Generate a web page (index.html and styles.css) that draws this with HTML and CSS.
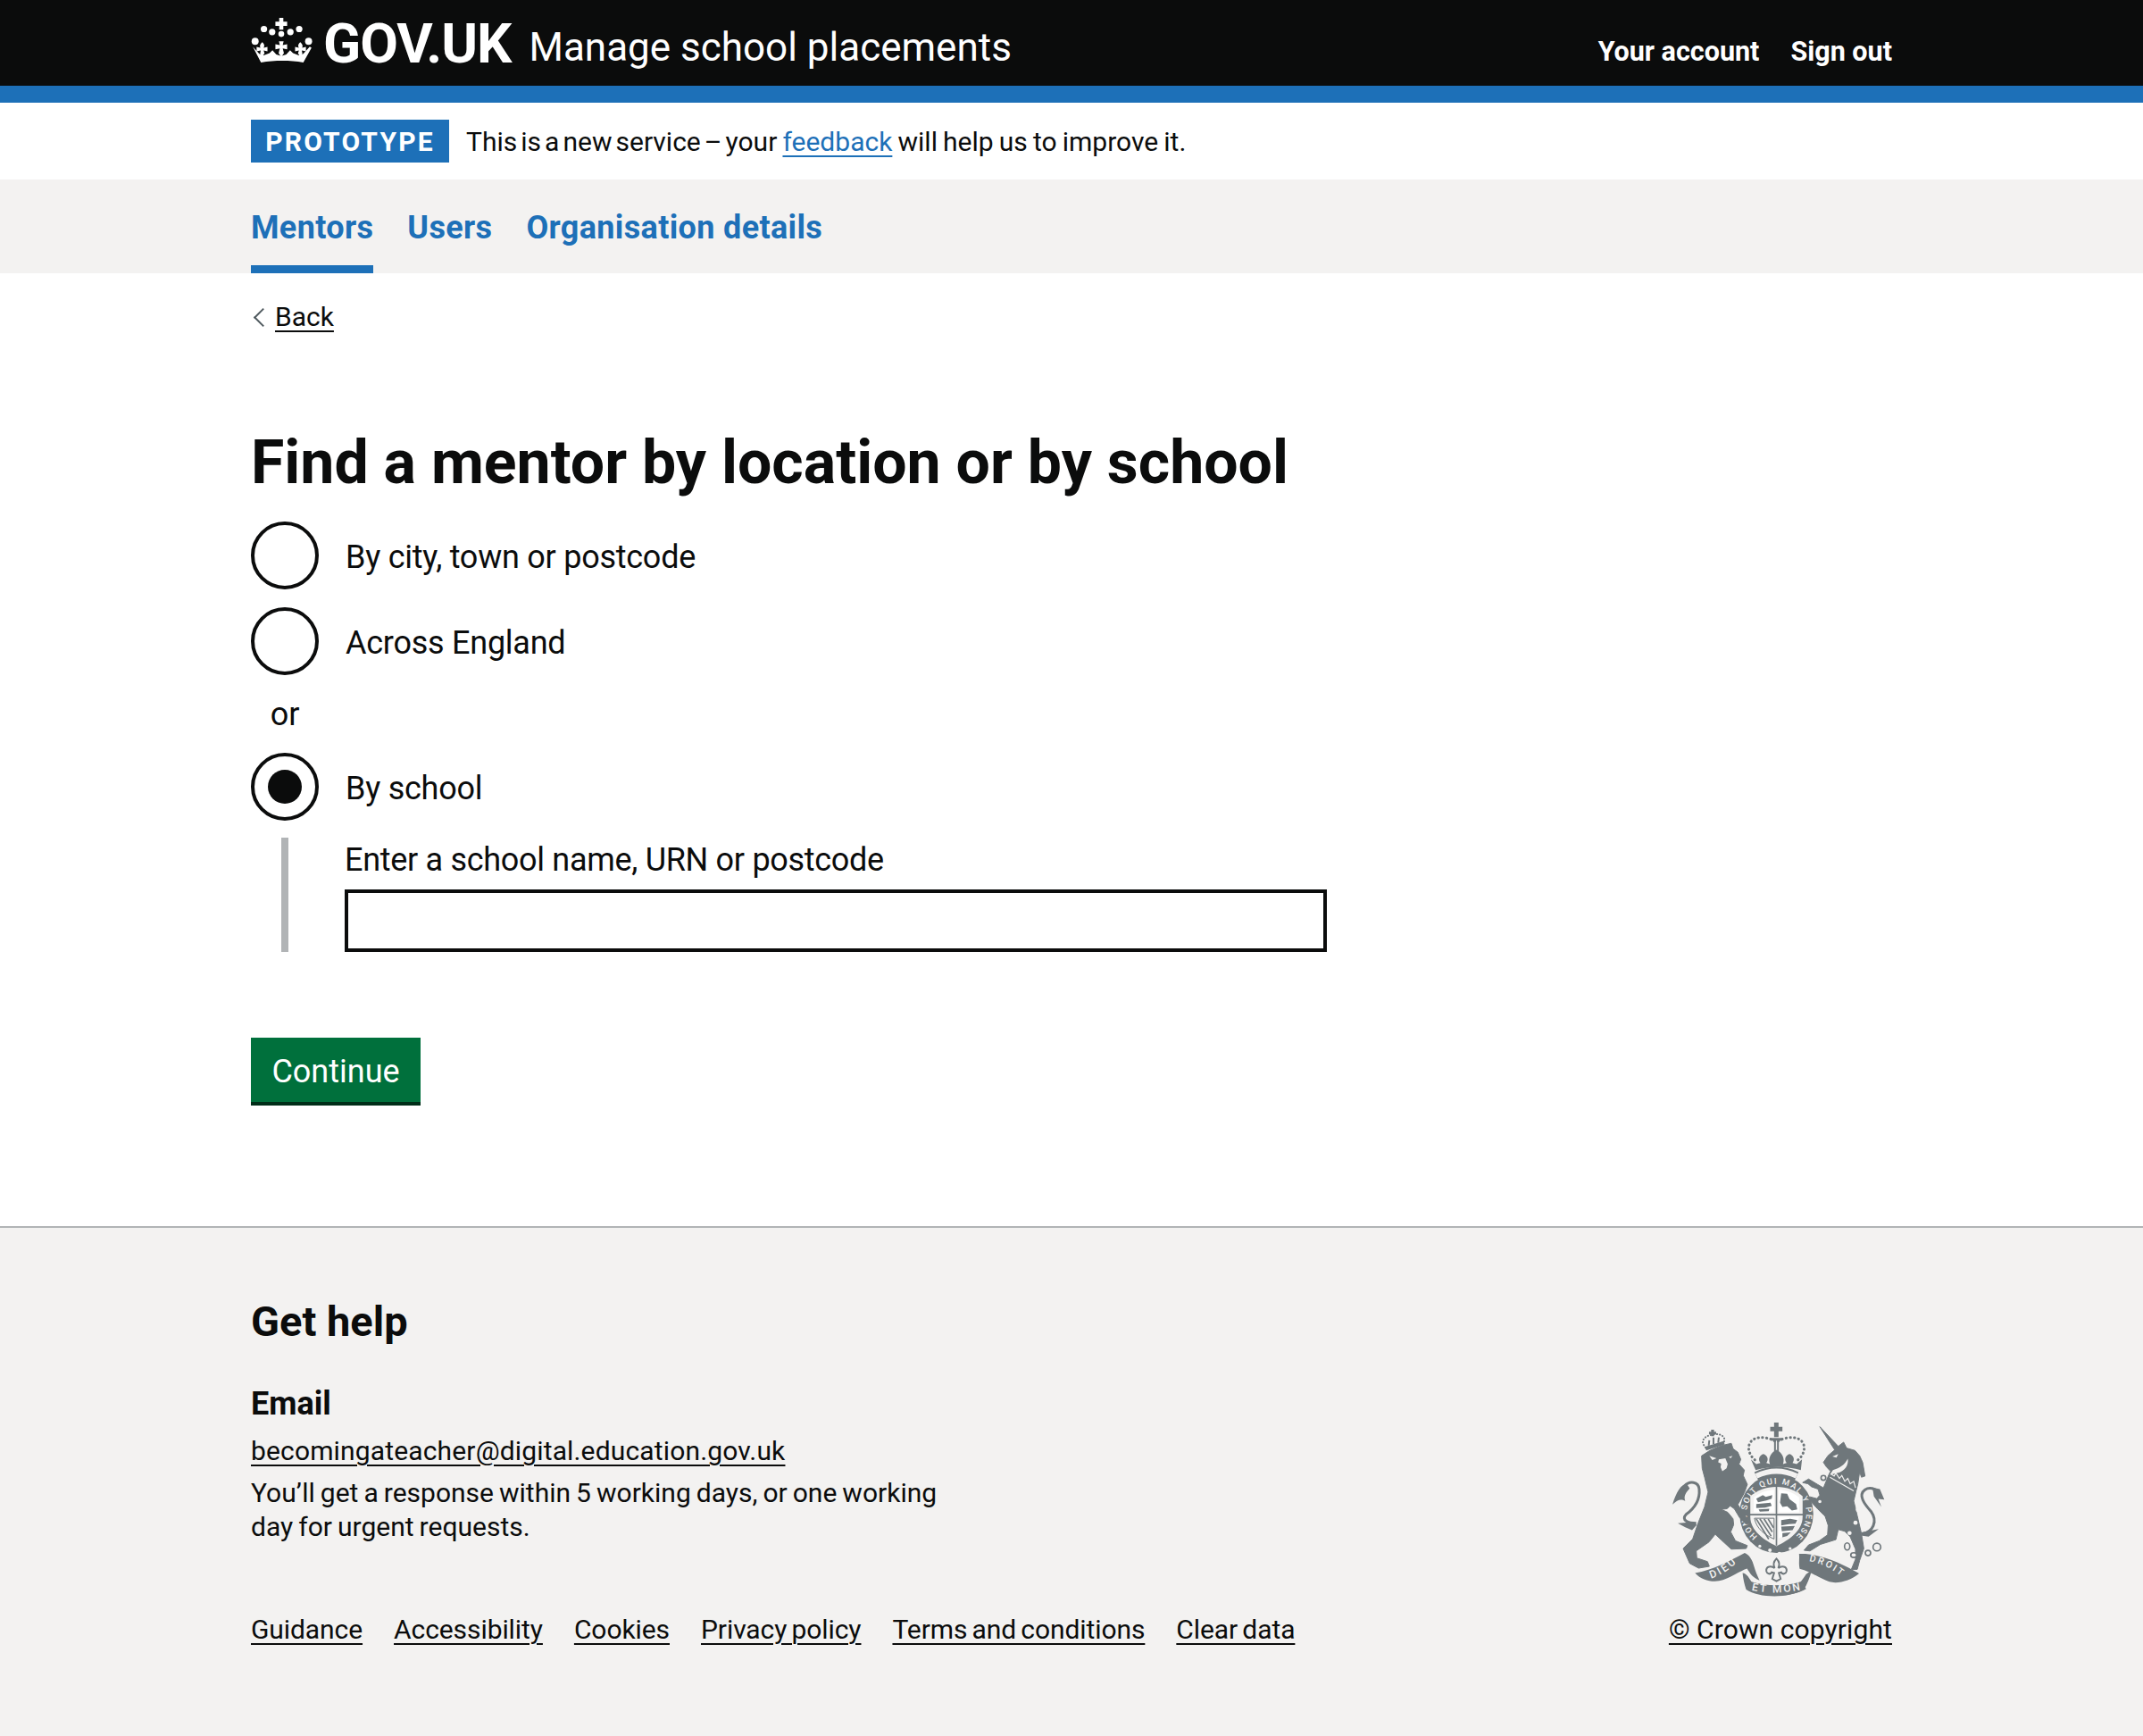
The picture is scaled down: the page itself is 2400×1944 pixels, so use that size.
FILE: index.html
```html
<!DOCTYPE html>
<html lang="en">
<head>
	<meta charset="UTF-8">
	<title>Find a mentor by location or by school</title>
	<link rel="stylesheet" href="styles.css">
</head>
<body>
	<header class="top">
		<div class="wrap top-in">
			<a class="logo" href="#">
				<svg class="crown" viewBox="33 30 207 152" aria-hidden="true">
					<path d="M128 30h14v13h13v14h-13v13h-14V57h-13V43h13z"/>
					<circle cx="135" cy="85" r="10"/>
					<circle cx="46" cy="110" r="12"/><circle cx="76" cy="68" r="11"/><circle cx="104" cy="78" r="11"/>
					<circle cx="166" cy="78" r="11"/><circle cx="196" cy="68" r="11"/><circle cx="228" cy="110" r="12"/>
					<path d="M127 110h16l-3 13 15-3v17l-15-3 4 16-9 14-9-14 4-16-15 3v-17l15 3z"/>
					<path d="M70 113c9 7 8 14 5 19l13-3v15l-13-3 3 10-7 10-8-9 2-11-14 3v-15l13 3c-3-5-2-12 6-19z"/>
					<path d="M200 113c-9 7-8 14-5 19l-13-3v15l13-3-3 10 7 10 8-9-2-11 14 3v-15l-13 3c3-5 2-12-6-19z"/>
					<path d="M38 128l22 24 15 6 20-8 10-10 13 15 17 5 17-5 13-15 10 10 20 8 15-6 22-24 6 4-28 50c-46-8-96-8-144 0z"/>
				</svg>
				<span class="logo-txt">GOV.UK</span>
			</a>
			<a class="service" href="#">Manage school placements</a>
			<nav class="top-nav">
				<a href="#">Your account</a>
				<a href="#">Sign out</a>
			</nav>
		</div>
	</header>
	<div class="wrap phase">
		<strong class="tag">PROTOTYPE</strong>
		<span><span class="lead">This is a new service – your</span> <a href="#">feedback</a> will help us to improve it.</span>
	</div>
	<nav class="sub-nav">
		<div class="wrap sub-nav-in">
			<a class="on" href="#">Mentors</a>
			<a href="#">Users</a>
			<a href="#">Organisation details</a>
		</div>
	</nav>
	<main class="wrap main">
		<a class="back" href="#">Back</a>
		<h1>Find a mentor by location or by school</h1>
		<form>
			<label class="radio"><span class="dot"></span>By city, town or postcode</label>
			<label class="radio"><span class="dot"></span>Across England</label>
			<div class="or">or</div>
			<label class="radio"><span class="dot checked"></span>By school</label>
			<div class="reveal">
				<label class="field-label" for="school">Enter a school name, URN or postcode</label>
				<input class="field" id="school" type="text">
			</div>
			<button class="btn" type="button">Continue</button>
		</form>
	</main>
	<footer class="foot">
		<div class="wrap">
			<h2>Get help</h2>
			<div class="foot-mid">
				<div class="help">
					<h3>Email</h3>
					<p class="mail"><a href="#">becomingateacher@digital.education.gov.uk</a></p>
					<p class="note">You’ll get a response within 5 working days, or one working day for urgent requests.</p>
				</div>
				<svg class="crest" viewBox="100 60 722 592" aria-hidden="true">
					<defs>
						<path id="arcRing" d="M388 449A100 100 0 1 1 516 449"/>
						<path id="arcD" d="M228 592c34-8 70-34 104-68"/>
						<path id="arcE" d="M368 630c50 12 120 10 170-2"/>
						<path id="arcF" d="M562 532c44 8 84 30 116 58"/>
					</defs>
					<!-- crown over the shield -->
					<path d="M444 66h15v14h13v15h-13v20h-15V95h-13V80h13z"/>
					<rect x="433" y="118" width="38" height="9"/>
					<rect x="444" y="127" width="6" height="38"/><rect x="454" y="127" width="6" height="38"/>
					<path class="line dots" d="M458 128c30-16 70-18 84 8 10 22-4 46-20 58"/>
					<path class="line dots" d="M446 128c-30-16-70-18-84 8-10 22 4 46 20 58"/>
					<path d="M366 190l18 16 14-4c-10-14-2-26 10-30 12 4 20 16 10 30l12 4c-8-22 6-40 22-48 16 8 30 26 22 48l12-4c-10-14-2-26 10-30 12 4 20 16 10 30l14 4 18-16-4 36c-46-14-106-14-152 0z"/>
					<path class="band-out" d="M384 246Q452 214 520 246"/>
					<path class="band-in" d="M384 246Q452 214 520 246"/>
					<!-- garter and shield -->
					<ellipse cx="452" cy="373" rx="124" ry="132"/>
					<path class="bg" d="M452 282c34 0 66 12 88 32v70c0 46-46 78-88 98-42-20-88-52-88-98v-70c22-20 54-32 88-32z"/>
					<path class="quarter" d="M376 318c18-16 40-24 68-26v76h-68z"/>
					<path class="quarter" d="M460 292c28 2 50 10 68 26v50h-68z"/>
					<path class="quarter" d="M460 384h68c-4 34-36 56-68 72z"/>
					<path class="band" d="M362 376h180M452 282v198"/>
					<path class="beast" d="M384 322l22-12 10 6 22-6-2 12-18 6-28 6zM384 340l48-4 4 10-22 6-30 2zM392 358l36-2-2 8-30 2zM468 304l20 2 8 18 22 16 4 18-18 4-16-14-16 2-8-14zM468 394l30-4 24 4-6 12-22 2-26 4zM468 416l46-2-8 14-36 4zM472 438l28-2-12 12-16 4z"/>
					<path class="harp" d="M384 390l42 68M396 390l38 58M410 390l28 44M424 390l18 30"/>
					<path class="band thin" d="M378 388h66v70c-32-14-60-36-66-70z"/>
					<text class="motto"><textPath href="#arcRing" textLength="486" lengthAdjust="spacing">HONI SOIT QUI MAL Y PENSE</textPath></text>
					<circle class="bg" cx="430" cy="496" r="6"/><circle class="bg" cx="462" cy="507" r="6"/><circle class="bg" cx="396" cy="482" r="5"/><circle class="bg" cx="498" cy="490" r="5"/>
					<!-- lion -->
					<g transform="translate(60 60)">
						<path class="edge" d="M140 118L168 100 205 84 240 76 246 94 262 106 272 130 266 146 284 166 280 184 294 214 284 242 270 268 262 282 280 310 304 345 290 348 268 326 250 296 236 286 226 296 206 298 228 308 246 330 248 350 238 374 254 404 294 420 290 430 240 432 205 400 186 382 165 408 122 438 124 462 160 474 166 490 130 496 100 480 78 430 110 398 128 345 150 290 162 240 150 190 142 160z"/>
						<path class="bg-fill" d="M166 118l24 8-14 6zM198 130l22-4 8 20-4 14-14 10-6-14 2-12-10-4zM232 122l12-4-6 8z"/>
						<path class="line tail" d="M122 345C95 345 70 335 88 315 115 295 135 265 132 230 130 205 100 200 82 220"/>
						<path d="M90 212C70 215 55 240 42 282 60 265 70 262 85 270 78 252 90 240 100 228zM60 345l40-3 24 8-16 18-23-10z"/>
						<path class="line dots small" d="M154 90C134 70 146 52 178 46 208 40 224 58 214 74"/>
						<path d="M150 88l64-20 4 12-62 20zM172 30h10v7h7v9h-7v6h-10v-6h-7v-9h7z"/>
						<path class="line lion-crown" d="M164 84l2-18M180 78l0-22M196 74l2-18"/>
					</g>
					<!-- unicorn -->
					<g transform="translate(420 60)">
						<path class="edge" d="M178 20L240 86 258 72 268 92 296 100 312 118 322 140 330 186 318 190 312 172 306 212 300 236 292 270 304 320 318 380 326 430 312 470 304 500 284 500 298 466 298 432 280 390 262 372 240 366 232 400 180 416 145 438 125 436 140 418 176 404 204 384 206 352 196 322 192 318 170 296 135 258 145 256 168 262 178 250 172 230 150 222 138 212 120 208 140 196 170 214 190 226 208 182 214 170 200 155 190 140 205 118 228 98z"/>
						<path class="bg-fill" d="M222 166c23-6 40-18 50-38 4 20-10 44-36 48l-24 6zM220 120l20-8-6 12z"/>
						<path class="collar" d="M212 190l80 46M214 178l12 8 6-10 12 18 8-10 10 20 10-10 8 18 12-8 6 22"/>
						<circle class="ring" cx="190" cy="192" r="8"/><circle class="ring" cx="178" cy="272" r="8"/><circle class="hole" cx="308" cy="298" r="9"/>
						<circle class="hole" cx="298" cy="343" r="7"/><circle class="hole" cx="278" cy="378" r="7"/>
						<ellipse class="ring" cx="270" cy="423" rx="9" ry="12"/><ellipse class="ring" cx="292" cy="452" rx="10" ry="8"/><circle class="ring" cx="340" cy="445" r="9"/><circle class="ring" cx="370" cy="425" r="13"/>
						<path class="line tail" d="M322 380C355 375 375 340 350 305 328 280 305 250 330 232 345 222 365 228 372 240"/>
						<path d="M355 225l25 5 15 35-20-2 10 27-25-35zM318 376l58-12-34 26-26-4z"/>
					</g>
					<!-- motto scroll -->
					<path d="M178 572c60-8 120-42 167-67 16 6 26 24 32 46 4 14 10 28 18 46-24-10-32-24-42-40-20 6-60 34-94 42-30 4-60-4-81-27z"/>
					<path d="M338 572c6 0 12 4 18 12l12 18c50 16 116 16 166 0l14-20c4-8 10-12 22-16-6 20-14 44-26 62-50 30-150 30-194 0-6-18-10-36-12-56z"/>
					<path class="ribbon" d="M364 602c50 18 122 18 172 0l16 24c-50 30-150 30-198 0z"/>
					<path d="M528 508c60-4 140 28 202 66-28 24-70 36-100 28-34-12-60-34-100-44-4-16 0-34-2-50z"/>
					<text class="scroll"><textPath href="#arcD" startOffset="4" textLength="100">DIEU</textPath></text>
					<text class="scroll"><textPath href="#arcE" textLength="166">ET MON</textPath></text>
					<text class="scroll small"><textPath href="#arcF" textLength="118">DROIT</textPath></text>
					<!-- fleur -->
					<path class="fleur" d="M452 524c10 10 12 20 6 32 12-10 30-6 28 10-2 10-14 12-18 4l-8 2 6 20-14 8-14-8 6-20-8-2c-4 8-16 6-18-4-2-16 16-20 28-10-6-12-4-22 6-32z"/>
				</svg>
			</div>
			<div class="foot-links">
				<a href="#">Guidance</a>
				<a href="#">Accessibility</a>
				<a href="#">Cookies</a>
				<a href="#">Privacy policy</a>
				<a href="#">Terms and conditions</a>
				<a href="#">Clear data</a>
				<a class="copy" href="#">© Crown copyright</a>
			</div>
		</div>
	</footer>
</body>
</html>
```
FILE: styles.css
```css
* {margin: 0;padding: 0;box-sizing: border-box;}
html, body {height: 100%;}
body {display: flex;flex-direction: column;min-height: 100vh;font-family: Roboto, "Liberation Sans", sans-serif;color: #0b0c0c;background: #fff;}
a {color: inherit;text-underline-offset: 5px;text-decoration-thickness: 2px;}
.wrap {width: 1838px;margin: 0 auto;}

.top {height: 115px;background: #0b0c0c;border-bottom: 19px solid #1d70b8;}
.top-in {display: flex;height: 96px;}
.top a {color: #fff;text-decoration: none;}
.logo {display: flex;align-items: flex-start;padding-top: 20px;}
.crown {width: 69px;height: 50px;fill: #fff;}
.logo-txt {margin-left: 12px;font-size: 62px;line-height: 58px;font-weight: 700;letter-spacing: -1px;}
.service {margin-left: 20px;padding-top: 25px;font-size: 44px;line-height: 56px;}
.top-nav {display: flex;gap: 35px;margin-left: auto;padding-top: 38px;font-size: 30.5px;line-height: 40px;font-weight: 700;}

.phase {display: flex;align-items: center;gap: 19px;height: 86px;font-size: 30px;word-spacing: -1.3px;}
.phase .lead {word-spacing: -3.4px;}
.phase a {color: #1d70b8;}
.tag {display: block;width: 222px;height: 48px;background: #1d70b8;color: #fff;font-size: 30px;line-height: 50px;letter-spacing: 2.2px;text-align: center;}

.sub-nav {background: #f3f2f1;}
.sub-nav-in {display: flex;gap: 38px;height: 105px;}
.sub-nav a {height: 105px;padding-top: 32px;color: #1d70b8;font-size: 36px;line-height: 44px;font-weight: 700;letter-spacing: .35px;text-decoration: none;}
.sub-nav a.on {border-bottom: 9px solid #1d70b8;}

.main {flex: none;}
.back {display: inline-block;position: relative;margin-top: 34px;padding-left: 27px;font-size: 30px;line-height: 30px;}
.back::before {content: "";position: absolute;left: 6px;top: 8px;width: 13px;height: 13px;border-left: 2px solid #505a5f;border-bottom: 2px solid #505a5f;transform: rotate(45deg);}
h1 {margin-top: 110px;font-size: 68px;line-height: 76px;font-weight: 700;}

form {margin-top: 28px;}
.radio {display: flex;align-items: center;gap: 30px;height: 76px;margin-bottom: 20px;padding-top: 3px;font-size: 36px;letter-spacing: -.25px;}
.dot {position: relative;flex: none;width: 76px;height: 76px;margin-top: -3px;border: 4px solid #0b0c0c;border-radius: 50%;background: #fff;}
.dot.checked::after {content: "";position: absolute;left: 15px;top: 15px;width: 38px;height: 38px;border-radius: 50%;background: #0b0c0c;}
.or {width: 76px;margin-bottom: 18px;font-size: 36px;line-height: 49px;text-align: center;}
.reveal {margin: -1px 0 0 34px;padding-left: 63px;border-left: 8px solid #b1b4b6;}
.field-label {display: block;height: 58px;font-size: 36px;line-height: 50px;letter-spacing: -.3px;}
.field {display: block;width: 1100px;height: 70px;border: 4px solid #0b0c0c;border-radius: 0;background: #fff;}
.btn {display: block;width: 190px;height: 76px;margin-top: 96px;padding-top: 3px;border: 0;border-bottom: 4px solid #002d18;background: #00703c;color: #fff;font-family: inherit;font-size: 36px;}

.foot {flex: 1;margin-top: 135px;border-top: 2px solid #b1b4b6;background: #f3f2f1;font-size: 30px;line-height: 38px;}
h2 {margin-top: 77px;font-size: 47px;line-height: 56px;font-weight: 700;}
.foot-mid {display: flex;justify-content: space-between;align-items: flex-end;height: 282px;}
.help {width: 790px;align-self: flex-start;margin-top: 42px;}
h3 {font-size: 36px;line-height: 44px;font-weight: 700;margin-bottom: 12px;}
.mail {margin-bottom: 9px;letter-spacing: .15px;}
.note {word-spacing: -1.4px;}
.foot-links {display: flex;gap: 35px;margin-top: 16px;letter-spacing: -.08px;word-spacing: -2.2px;}
.foot-links .copy {margin-left: auto;letter-spacing: .1px;word-spacing: 0;}

.crest {width: 241px;height: 197px;margin: 0 6px 2px 0;fill: #6f777b;}
.crest .bg, .crest .bg-fill, .crest .hole {fill: #f3f2f1;}
.crest .edge {stroke: #6f777b;stroke-width: 3;stroke-linejoin: round;}
.crest .quarter {fill: #fff;}
.crest .band {fill: none;stroke: #6f777b;stroke-width: 5;}
.crest .band.thin {stroke-width: 3;}
.crest .beast {fill: #6f777b;}
.crest .harp {fill: none;stroke: #6f777b;stroke-width: 5;}
.crest .band-out {fill: none;stroke: #6f777b;stroke-width: 30;}
.crest .band-in {fill: none;stroke: #f3f2f1;stroke-width: 18;}
.crest .line {fill: none;stroke: #6f777b;stroke-width: 5;}
.crest .line.dots {stroke-width: 9;stroke-dasharray: 1 13;stroke-linecap: round;}
.crest .line.small {stroke-width: 6;stroke-dasharray: 1 9;}
.crest .tail {stroke-width: 9;}
.crest .lion-crown {stroke-width: 6;}
.crest .ring {fill: #f3f2f1;stroke: #6f777b;stroke-width: 5;}
.crest .collar {fill: none;stroke: #f3f2f1;stroke-width: 3.5;}
.crest .ribbon {fill: #6f777b;}
.crest .fleur {fill: #f3f2f1;stroke: #6f777b;stroke-width: 6;}
.crest .motto {fill: #f3f2f1;font-family: Roboto, sans-serif;font-size: 28px;font-weight: 500;}
.crest .scroll {fill: #f3f2f1;font-family: Roboto, sans-serif;font-size: 36px;font-weight: 500;}
.crest .scroll.small {font-size: 32px;}
```
